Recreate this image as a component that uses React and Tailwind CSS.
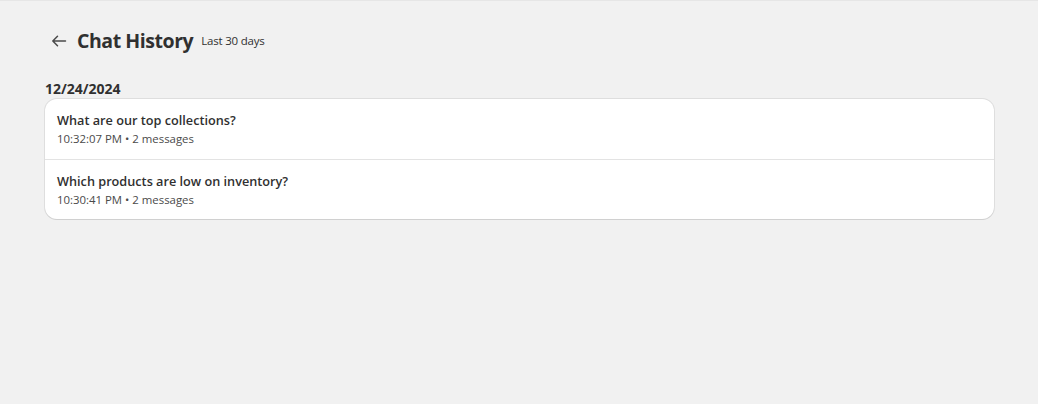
import React from "react";

const chats = [
  { title: "What are our top collections?", time: "10:32:07 PM", count: 2 },
  { title: "Which products are low on inventory?", time: "10:30:41 PM", count: 2 },
];

export default function App() {
  return (
    <div
      className="min-h-[404px] w-full bg-[#f1f1f1] border-t border-[#e6e6e6] text-[#303030]"
      style={{ fontFamily: '"Open Sans", "Noto Sans", sans-serif' }}
    >
      <div className="pl-[45px] pr-[44px] pt-[26px]">
        <div className="flex items-center h-[28px]">
          <button className="w-[28px] h-[28px] flex items-center justify-center text-[#4a4a4a]">
            <svg width="20" height="20" viewBox="0 0 20 20" fill="none">
              <path d="M16.5 10H3.8M8.5 5.3L3.8 10L8.5 14.7" stroke="currentColor" strokeWidth="1.5" strokeLinecap="round" strokeLinejoin="round" />
            </svg>
          </button>
          <div className="flex items-center ml-[4px]">
            <h1 className="text-[19.5px] font-bold leading-[28px] tracking-[-0.45px]">Chat History</h1>
            <span className="ml-[8px] text-[11.5px] tracking-[-0.2px] text-[#303030]">Last 30 days</span>
          </div>
        </div>
        <div className="mt-[25px] text-[14px] font-bold leading-[18px]">12/24/2024</div>
        <div className="mt-[1px] bg-white rounded-[12px] shadow-[0_1px_0_0_rgba(26,26,26,0.07),0_0_0_1px_rgba(0,0,0,0.08)] overflow-hidden">
          {chats.map((c, i) => (
            <div
              key={i}
              className={`px-[12px] h-[60px] flex flex-col justify-center ${i > 0 ? "border-t border-[#e3e3e3]" : ""}`}
            >
              <div className="text-[12.7px] font-semibold leading-[18px] text-[#303030]">{c.title}</div>
              <div className="text-[11.4px] leading-[16px] mt-[2px] text-[#4a4a4a]">
                {c.time} • {c.count} messages
              </div>
            </div>
          ))}
        </div>
      </div>
    </div>
  );
}
